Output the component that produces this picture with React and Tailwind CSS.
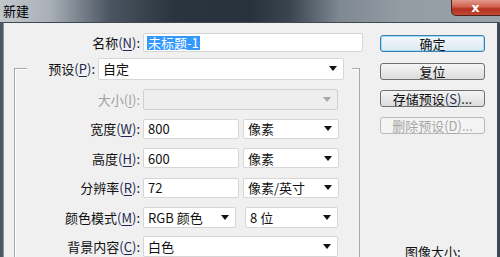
import React from "react";

const FONT = { fontFamily: '"Noto Sans CJK SC", "Noto Sans", sans-serif' };

function Key({ k }) {
  return (
    <span className="text-[#1f2a52]">
      (<span className="underline underline-offset-2">{k}</span>)
    </span>
  );
}

function Tri({ grey }) {
  return (
    <svg width="8" height="5" viewBox="0 0 8 5" className="ml-auto mr-[6px] shrink-0">
      <path d="M0 0 H8 L4 5 Z" fill={grey ? "#a8a8a8" : "#111"} />
    </svg>
  );
}

function Field({ w, children, select, disabled, h = "h-[20px]" }) {
  return (
    <div
      className={`${w} ${h} flex items-center rounded-[2px] border ${
        disabled ? "border-[#d0d0d0] bg-[#eeeeee]" : "border-[#d6d6d6] bg-white"
      } pl-[4px] text-[13px] text-[#111] shrink-0`}
    >
      <span className="whitespace-nowrap">{children}</span>
      {select && <Tri grey={disabled} />}
    </div>
  );
}

function Row({ label, k, disabled, children }) {
  return (
    <div className="h-[29.5px] flex items-center">
      <div
        className={`w-[125px] text-right text-[13px] whitespace-nowrap ${
          disabled ? "text-[#a0a0a0]" : "text-[#111]"
        }`}
      >
        {label}
        {disabled ? (
          <span>
            (<span className="underline underline-offset-2">{k}</span>):
          </span>
        ) : (
          <>
            <Key k={k} />:
          </>
        )}
      </div>
      <div className="flex items-center ml-[3px]">{children}</div>
    </div>
  );
}

function Btn({ children, primary, disabled }) {
  return (
    <div
      className={`w-[105px] h-[17px] rounded-[3px] border text-center text-[13px] leading-[15px] whitespace-nowrap ${
        primary
          ? "border-[#3c7fb1] bg-[linear-gradient(to_bottom,#f4f9fc,#dbe9f2)] shadow-[inset_0_0_0_1px_#9fdcf7] text-[#111]"
          : disabled
          ? "border-[#b5b9bc] bg-[#f4f4f4] text-[#a6a6a6]"
          : "border-[#707070] bg-[linear-gradient(to_bottom,#f5f5f5,#dcdcdc)] text-[#111]"
      }`}
    >
      {children}
    </div>
  );
}

export default function App() {
  return (
    <div style={FONT} className="w-[500px] h-[257px] overflow-hidden flex flex-col bg-[#f0f0f0]">
      {/* title bar */}
      <div className="h-[22px] shrink-0 flex items-start bg-[linear-gradient(to_right,#c2c7cc_0%,#a9b0b7_10%,#4a5561_22%,#2a343e_35%,#28323c_50%,#3a4550_58%,#7f8992_68%,#939ba3_80%,#9aa2aa_100%)]">
        <div className="pl-[3px] pt-[2px] text-[13px] leading-[17px] text-black">新建</div>
        <div className="ml-auto mr-[-4px] w-[53px] h-[16px] rounded-b-[5px] border border-t-0 border-[#4e2420] bg-[linear-gradient(to_bottom,#e39a8c_0%,#d0604c_45%,#b3301e_60%,#c24a34_100%)] flex items-center justify-center">
          <span className="text-white text-[13px] font-bold leading-[14px] mr-[4px]" style={{ fontFamily: '"DejaVu Sans", sans-serif' }}>
            x
          </span>
        </div>
      </div>
      {/* body */}
      <div className="flex-1 flex border-t border-[#3f4954] border-l-[3px] border-l-[#4d5863] border-r-[3px] border-r-[#3f4954] shadow-[inset_1px_0_0_#8a949c]">
        {/* left column */}
        <div className="w-[360px] shrink-0 flex flex-col">
          <div className="mt-[10px] flex items-center">
            <div className="w-[137px] text-right text-[13px] text-[#111] whitespace-nowrap">
              名称<Key k="N" />:
            </div>
            <div className="ml-[3px] w-[220px] h-[19px] flex items-center rounded-[2px] border border-[#d6d6d6] bg-white pl-[3px]">
              <span className="bg-[#3399ff] text-white text-[13px] leading-[14px] px-[1px]">未标题-1</span>
            </div>
          </div>
          {/* group box */}
          <div className="ml-[11px] mt-[15px] w-[346px] flex-1 border-t border-l border-r border-[#a9a9a9] shadow-[inset_1px_1px_0_#ffffff]">
            <div className="-mt-[11px] ml-[12px] mr-[7px] h-[22px] bg-[#f0f0f0] flex items-center">
              <div className="w-[68px] text-right text-[13px] text-[#111] whitespace-nowrap">
                预设<Key k="P" />:
              </div>
              <div className="ml-[3px]">
                <Field w="w-[246px]" h="h-[22px]" select>
                  自定
                </Field>
              </div>
            </div>
            <div className="mt-[5px] flex flex-col">
              <Row label="大小" k="I" disabled>
                <Field w="w-[195px]" h="h-[21px]" select disabled></Field>
              </Row>
              <Row label="宽度" k="W">
                <Field w="w-[96px]">800</Field>
                <div className="ml-[4px]">
                  <Field w="w-[96px]" select>
                    像素
                  </Field>
                </div>
              </Row>
              <Row label="高度" k="H">
                <Field w="w-[96px]">600</Field>
                <div className="ml-[4px]">
                  <Field w="w-[96px]" select>
                    像素
                  </Field>
                </div>
              </Row>
              <Row label="分辨率" k="R">
                <Field w="w-[96px]">72</Field>
                <div className="ml-[4px]">
                  <Field w="w-[96px]" select>
                    像素/英寸
                  </Field>
                </div>
              </Row>
              <Row label="颜色模式" k="M">
                <Field w="w-[93px]" h="h-[21px]" select>
                  RGB 颜色
                </Field>
                <div className="ml-[9px]">
                  <Field w="w-[93px]" h="h-[21px]" select>
                    8 位
                  </Field>
                </div>
              </Row>
              <Row label="背景内容" k="C">
                <Field w="w-[195px]" h="h-[21px]" select>
                  白色
                </Field>
              </Row>
            </div>
          </div>
        </div>
        {/* right column */}
        <div className="flex-1 flex flex-col pl-[17px] pt-[12px]">
          <Btn primary>确定</Btn>
          <div className="mt-[11px]">
            <Btn>复位</Btn>
          </div>
          <div className="mt-[10px]">
            <Btn>
              存储预设<Key k="S" />...
            </Btn>
          </div>
          <div className="mt-[10px]">
            <Btn disabled>
              删除预设(<span className="underline underline-offset-2">D</span>)...
            </Btn>
          </div>
          <div className="mt-[111px] ml-[25px] text-[13px] leading-[14px] text-[#111] whitespace-nowrap">图像大小:</div>
        </div>
      </div>
    </div>
  );
}
